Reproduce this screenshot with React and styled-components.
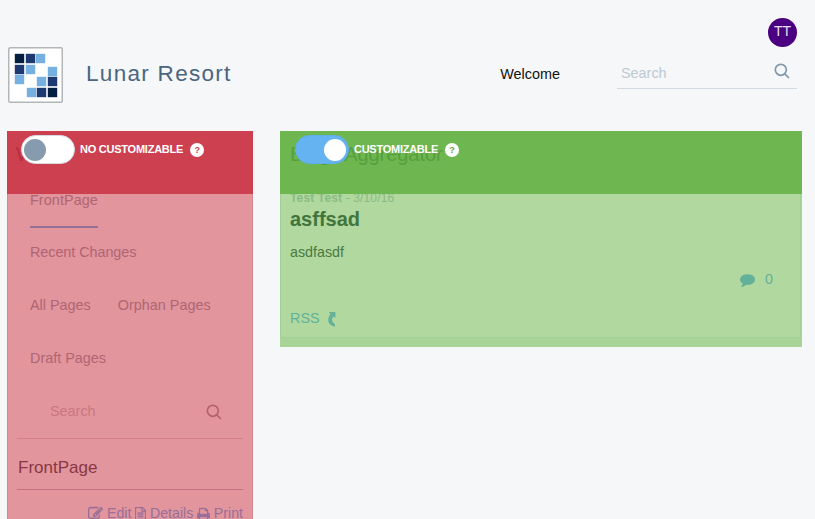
import React from "react";
import styled, { createGlobalStyle, css } from "styled-components";

const Global = createGlobalStyle`
  * { box-sizing: border-box; }
  html, body { margin: 0; background: #f5f7f9; overflow: hidden; }
  body { font-family: "Liberation Sans", Arial, sans-serif; font-size: 14.4px; }
`;

const Page = styled.div`
  width: 815px;
  height: 519px;
  overflow: hidden;
  display: flex;
  flex-direction: column;
`;

const Header = styled.header`
  flex: none;
  height: 131px;
  padding: 18px 18px 0 8px;
  display: flex;
  align-items: flex-start;
`;

const Logo = styled.svg`
  width: 55px;
  height: 56px;
  margin-top: 29px;
  flex: none;
`;

const SiteName = styled.h1`
  margin: 41px 0 0 23px;
  font-weight: 400;
  font-size: 22.5px;
  line-height: 30px;
  letter-spacing: 1.3px;
  color: #4b6580;
  flex: 1;
`;

const Welcome = styled.span`
  margin: 46px 57px 0 0;
  line-height: 20px;
  color: #111;
`;

const UserArea = styled.div`
  width: 180px;
  display: flex;
  flex-direction: column;
  align-items: flex-end;
`;

const Avatar = styled.div`
  width: 29px;
  height: 29px;
  border-radius: 50%;
  background: #4b0082;
  color: #e8e0f0;
  font-size: 14px;
  line-height: 27px;
  text-align: center;
`;

const SearchBox = styled.div`
  display: flex;
  justify-content: space-between;
  align-items: center;
  width: 100%;
  ${(p) =>
    p.$muted
      ? css`
          height: 54px;
          padding: 0 21px 2px 33px;
          color: #c87782;
          border-bottom: 1px solid #d38089;
          svg { color: #b5616f; margin-top: 2px; }
        `
      : css`
          height: 42px;
          padding: 10px 7px 0 4px;
          color: #bccad2;
          border-bottom: 1px solid #d3d9e0;
          svg { color: #8197a9; margin-top: -3px; }
        `}
`;

const Columns = styled.main`
  flex: 1;
  display: flex;
  align-items: flex-start;
  gap: 27px;
  padding-left: 7px;
`;

const Panel = styled.section`
  display: flex;
  flex-direction: column;
  ${(p) =>
    p.$locked
      ? css`
          width: 246px;
          height: 388px;
          background: #e2959d;
        `
      : css`
          width: 522px;
          height: 216px;
          background: #a9d498;
        `}
`;

const PanelBar = styled.div`
  position: relative;
  flex: none;
  height: 63px;
  padding-left: 10px;
  background: ${(p) => (p.$locked ? "#cd4050" : "#6eb650")};
`;

const FadedTitle = styled.h2`
  margin: 0 0 0 ${(p) => (p.$locked ? -1 : 0)}px;
  font-weight: 400;
  font-size: 20px;
  line-height: 46px;
  letter-spacing: -0.05px;
  color: ${(p) => (p.$locked ? "#b92d44" : "#56a03d")};
`;

const Controls = styled.div`
  position: absolute;
  top: 4px;
  left: ${(p) => (p.$locked ? 14 : 15)}px;
  display: flex;
  align-items: center;
`;

const Toggle = styled.span`
  width: 54px;
  height: 29px;
  border-radius: 15px;
  display: flex;
  align-items: center;
  padding: 0 2px;
  justify-content: ${(p) => (p.$on ? "flex-end" : "flex-start")};
  background: ${(p) => (p.$on ? "#65b3f0" : "#fff")};
  border: 1px solid ${(p) => (p.$on ? "#5fadea" : "#d5dbe0")};
  &::after {
    content: "";
    width: 22px;
    height: 22px;
    border-radius: 50%;
    background: ${(p) => (p.$on ? "#fff" : "#869bad")};
  }
`;

const ControlLabel = styled.b`
  margin: -2px 7px 0 5px;
  font-size: 11px;
  line-height: 28px;
  color: #fff;
  letter-spacing: ${(p) => p.$track}px;
`;

const Help = styled.span`
  width: 14px;
  height: 14px;
  margin-top: 1px;
  border-radius: 50%;
  background: #fff;
  font-size: 9px;
  font-weight: 700;
  line-height: 14px;
  text-align: center;
  color: ${(p) => (p.$locked ? "#cd4050" : "#5aa33c")};
`;

const WikiBody = styled.div`
  flex: 1;
  min-height: 0;
  padding: 0 9px;
  border: solid #d38890;
  border-width: 0 1px;
`;

const WikiNav = styled.nav`
  display: flex;
  flex-wrap: wrap;
  column-gap: 27px;
  padding-left: 13px;
  height: 191px;
  align-content: flex-start;
`;

const NavItem = styled.a`
  height: ${(p) => (p.$active ? 34 : 53)}px;
  line-height: ${(p) => (p.$active ? 13 : 49)}px;
  margin-right: ${(p) => (p.$wide ? 60 : 0)}px;
  letter-spacing: ${(p) => p.$track || 0}px;
  color: #af6573;
  border-bottom: ${(p) => (p.$active ? "2px solid #97709a" : "0")};
`;

const WikiTitle = styled.h3`
  margin: 0;
  height: 51px;
  padding: 7px 0 0 1px;
  font-size: 17px;
  font-weight: 400;
  line-height: 43px;
  color: #893745;
  border-bottom: 1px solid #c27280;
`;

const Actions = styled.div`
  display: flex;
  justify-content: flex-end;
  align-items: center;
  height: 46px;
  font-size: 14.2px;
  color: #986f99;
  svg { margin: 1px 4px 0 0; stroke: currentColor; stroke-width: 40; }
  span { margin-right: 3.5px; }
  span:last-child { margin-right: 0; }
`;

const BlogBody = styled.div`
  height: 144px;
  margin-right: 1px;
  padding: 0 27px 0 9px;
  display: flex;
  flex-direction: column;
  background: #b0d89f;
  border: 1px solid #a0cf98;
  border-top: 0;
`;

const Byline = styled.div`
  height: 12px;
  line-height: 8px;
  font-size: 12px;
  letter-spacing: 0.14px;
  color: #8bbb84;
`;

const PostTitle = styled.h3`
  margin: 0;
  font-size: 20px;
  line-height: 26px;
  color: #41753c;
`;

const PostText = styled.p`
  margin: 11px 0 0;
  font-size: 14.3px;
  line-height: 18px;
  color: #4a7a43;
`;

const Comments = styled.div`
  margin-top: 9px;
  display: flex;
  align-items: center;
  align-self: flex-end;
  gap: 10px;
  height: 18px;
  color: #63b198;
`;

const Rss = styled.div`
  margin-top: 20px;
  display: flex;
  align-items: center;
  gap: 8px;
  height: 20px;
  color: #63b198;
  svg { margin-top: 2px; }
`;

const TILES = [
  [6, 6, "#041e42"], [17, 6, "#1d3a70"], [27, 6, "#76b0e0"],
  [6, 17, "#1d3a70"], [17, 17, "#76b0e0"], [39, 19, "#76b0e0"],
  [6, 27, "#76b0e0"], [28, 29, "#76b0e0"], [39, 29, "#1d3a70"],
  [18, 40, "#76b0e0"], [28, 40, "#1d3a70"], [39, 40, "#041e42"],
];

const LogoMark = () => (
  <Logo viewBox="0 0 55 56">
    <rect x=".75" y=".75" width="53.5" height="54.5" rx="1.5" fill="#fff" stroke="#b2b6b9" strokeWidth="1.5" />
    {TILES.map(([x, y, fill]) => (
      <rect key={`${x}-${y}`} x={x + 0.8} y={y + 0.8} width="9.4" height="9.4" fill={fill} />
    ))}
  </Logo>
);

const SearchIcon = () => (
  <svg width="16" height="16" viewBox="0 0 16 16" fill="none" stroke="currentColor" strokeWidth="1.7">
    <circle cx="6.8" cy="6.8" r="5.5" />
    <path d="M10.8 10.8 15 15" />
  </svg>
);

const Glyph = ({ d, size = 14, width = size, box = "0 0 1792 1792" }) => (
  <svg width={width} height={size} viewBox={box} fill="currentColor"><path d={d} /></svg>
);

const EDIT = "M888 1184l116-116-152-152-116 116v56h96v96h56zm440-720q-16-16-33 1l-350 350q-17 17-1 33t33-1l350-350q17-17 1-33zm80 594v190q0 119-84.5 203.5t-203.5 84.5h-832q-119 0-203.5-84.5t-84.5-203.5v-832q0-119 84.5-203.5t203.5-84.5h832q63 0 117 25 15 7 18 23 3 17-9 29l-49 49q-14 14-32 8-23-6-45-6h-832q-66 0-113 47t-47 113v832q0 66 47 113t113 47h832q66 0 113-47t47-113v-126q0-13 9-22l64-64q15-15 35-7t20 29zm-96-738l288 288-672 672h-288v-288zm444 132l-92 92-288-288 92-92q28-28 68-28t68 28l152 152q28 28 28 68t-28 68z";
const FILE = "M1596 380q28 28 48 76t20 88v1152q0 40-28 68t-68 28h-1344q-40 0-68-28t-28-68v-1600q0-40 28-68t68-28h896q40 0 88 20t76 48zm-444-244v376h376q-10-29-22-41l-313-313q-12-12-41-22zm384 1528v-1024h-416q-40 0-68-28t-28-68v-416h-768v1536h1280zm-1024-864q0-14 9-23t23-9h704q14 0 23 9t9 23v64q0 14-9 23t-23 9h-704q-14 0-23-9t-9-23v-64zm736 224q14 0 23 9t9 23v64q0 14-9 23t-23 9h-704q-14 0-23-9t-9-23v-64q0-14 9-23t23-9h704zm0 256q14 0 23 9t9 23v64q0 14-9 23t-23 9h-704q-14 0-23-9t-9-23v-64q0-14 9-23t23-9h704z";
const PRINT = "M448 1536h896v-256h-896v256zm0-640h896v-384h-160q-40 0-68-28t-28-68v-160h-640v640zm1152 64q0-26-19-45t-45-19-45 19-19 45 19 45 45 19 45-19 19-45zm128 0v416q0 13-9.5 22.5t-22.5 9.5h-224v160q0 40-28 68t-68 28h-960q-40 0-68-28t-28-68v-160h-224q-13 0-22.5-9.5t-9.5-22.5v-416q0-79 56.5-135.5t135.5-56.5h64v-544q0-40 28-68t68-28h672q40 0 88 20t76 48l152 152q28 28 48 76t20 88v256h64q79 0 135.5 56.5t56.5 135.5z";
const COMMENT = "M1792 896q0 174-120 321.5t-326 233-450 85.5q-70 0-145-8-198 175-460 242-49 14-114 22-17 2-30.5-9t-17.5-29v-1q-3-4-.5-12t2-10 4.5-9.5l6-9 7-8.5 8-9q7-8 31-34.5t34.5-38 31-39.5 32.5-51 27-59 26-76q-157-89-247.5-220t-90.5-281q0-130 71-248.5t191-204.5 286-136.5 348-50.5q244 0 450 85.5t326 233 120 321.5z";

const ArrowIcon = () => (
  <svg width="8" height="15" viewBox="0 0 8 15" fill="currentColor">
    <path d="M.8 0H7.4V6L5.6 4.6C3.3 6.6 3.6 10 7 12.3V14.6C.2 13.6-1.8 7.5 2.5 2Z" />
  </svg>
);

const PanelHead = ({ locked, title, label, track }) => (
  <PanelBar $locked={locked}>
    <FadedTitle $locked={locked}>{title}</FadedTitle>
    <Controls $locked={locked}>
      <Toggle $on={!locked} />
      <ControlLabel $track={track}>{label}</ControlLabel>
      <Help $locked={locked}>?</Help>
    </Controls>
  </PanelBar>
);

export default function App() {
  return (
    <Page>
      <Global />
      <Header>
        <LogoMark />
        <SiteName>Lunar Resort</SiteName>
        <Welcome>Welcome</Welcome>
        <UserArea>
          <Avatar>TT</Avatar>
          <SearchBox>Search<SearchIcon /></SearchBox>
        </UserArea>
      </Header>
      <Columns>
        <Panel $locked>
          <PanelHead locked title="W" label="NO CUSTOMIZABLE" track={-0.24} />
          <WikiBody>
            <WikiNav>
              <NavItem $active $wide $track={0.08}>FrontPage</NavItem>
              <NavItem $wide $track={-0.06}>Recent Changes</NavItem>
              <NavItem>All Pages</NavItem>
              <NavItem>Orphan Pages</NavItem>
              <NavItem>Draft Pages</NavItem>
            </WikiNav>
            <SearchBox $muted>Search<SearchIcon /></SearchBox>
            <WikiTitle>FrontPage</WikiTitle>
            <Actions>
              <Glyph d={EDIT} size={15} /><span>Edit</span>
              <Glyph d={FILE} size={13} width={11} box="128 0 1536 1792" /><span>Details</span>
              <Glyph d={PRINT} size={14} width={13} box="64 0 1664 1792" /><span>Print</span>
            </Actions>
          </WikiBody>
        </Panel>
        <Panel>
          <PanelHead title="Blogs Aggregator" label="CUSTOMIZABLE" track={-0.26} />
          <BlogBody>
            <Byline><b>Test Test</b> - 3/10/16</Byline>
            <PostTitle>asffsad</PostTitle>
            <PostText>asdfasdf</PostText>
            <Comments><Glyph d={COMMENT} size={15} />0</Comments>
            <Rss>RSS<ArrowIcon /></Rss>
          </BlogBody>
        </Panel>
      </Columns>
    </Page>
  );
}
